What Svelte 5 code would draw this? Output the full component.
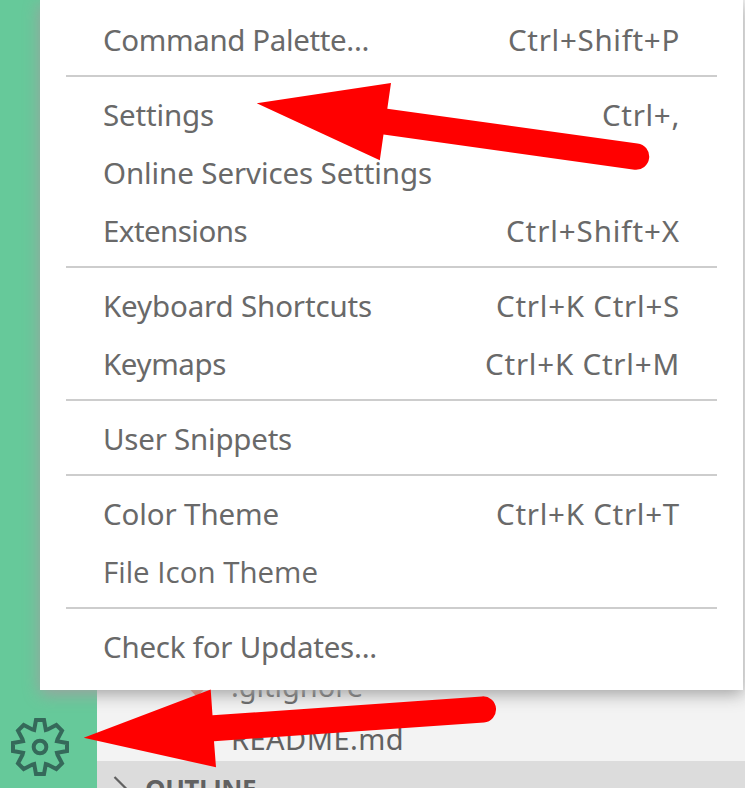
<script>
  const groups = [
    [{ label: 'Command Palette...', w: 264, keys: 'Ctrl+Shift+P', kw: 170 }],
    [
      { label: 'Settings', w: 109, keys: 'Ctrl+,', kw: 76 },
      { label: 'Online Services Settings', w: 327 },
      { label: 'Extensions', w: 142, keys: 'Ctrl+Shift+X', kw: 172 }
    ],
    [
      { label: 'Keyboard Shortcuts', w: 267, keys: 'Ctrl+K Ctrl+S', kw: 182 },
      { label: 'Keymaps', w: 121, keys: 'Ctrl+K Ctrl+M', kw: 193 }
    ],
    [{ label: 'User Snippets', w: 187 }],
    [
      { label: 'Color Theme', w: 174, keys: 'Ctrl+K Ctrl+T', kw: 182 },
      { label: 'File Icon Theme', w: 213, plain: true }
    ],
    [{ label: 'Check for Updates...', w: 272 }]
  ];

  // Tracks a label so that it occupies the given width.
  function fit(node, width) {
    const natural = node.getBoundingClientRect().width;
    const count = node.textContent.length;
    node.style.letterSpacing = `${(width + 2 - natural) / count}px`;
  }
</script>

<div class="window">
  <aside class="activity">
    <svg class="gear" viewBox="-90 -90 180 180" width="60" height="60">
      <g fill="none" stroke="#35695a" stroke-width="12" stroke-miterlimit="8">
        <path d="M-12-81H12L17.500-51L23-52.500L49-66L66-49L52.500-23L51-17.500L81-12V12L51 17.500L52.500 23L66 49L49 66L23 52.500L17.500 51L12 81H-12L-17.500 51L-23 52.500L-49 66L-66 49L-52.500 23L-51 17.500L-81 12V-12L-51-17.500L-52.500-23L-66-49L-49-66L-23-52.500L-17.500-51Z" />
        <circle r="19" />
      </g>
    </svg>
  </aside>
  <main class="explorer">
    <div class="files">
      <div class="file">
        <svg class="git" viewBox="0 0 30 30" width="30" height="30">
          <path d="M0 15L14 30L28 15L14 1Z" fill="#f0805c" />
        </svg>
        <span use:fit={130}>.gitignore</span>
      </div>
      <div class="file"><span use:fit={171}>README.md</span></div>
    </div>
    <div class="outline">
      <svg class="chevron" viewBox="0 0 16 28" width="16" height="28">
        <path d="M1.500 1L14 13.500L1.500 26" fill="none" stroke="#616161" stroke-width="2.200" />
      </svg>
      <b use:fit={109}>OUTLINE</b>
    </div>
  </main>

  <nav class="menu">
    {#each groups as group}
      <ul>
        {#each group as item}
          <li>
            <span class:plain={item.plain} use:fit={item.w}>{item.label}</span>
            {#if item.keys}<span class="keys" use:fit={item.kw}>{item.keys}</span>{/if}
          </li>
        {/each}
      </ul>
    {/each}
  </nav>

  <svg class="arrows" viewBox="0 0 745 788" width="745" height="788" fill="#f00">
    <path d="M256.700 103.300L391 83L387.300 108.700L637.500 143.400A13.200 13.200 0 0 1 634.500 169.700L383.500 134.500L379.800 160.300Z" />
    <path d="M83.700 737.700L210.700 689.500L212.500 715.300L482 696.400A13 13 0 0 1 484 722.400L214 741.300L216 767.300Z" />
  </svg>
</div>

<style>
  .window {
    position: relative;
    display: flex;
    width: 745px;
    height: 788px;
    overflow: hidden;
    font-family: 'Noto Sans', 'Open Sans', sans-serif;
    font-size: 29.500px;
    color: #616161;
    white-space: nowrap;
  }
  .activity {
    width: 97px;
    display: flex;
    flex-direction: column;
    justify-content: flex-end;
    padding: 0 0 11px 10px;
    box-sizing: border-box;
    background: #66c99a;
  }
  .gear { display: block; }
  .explorer {
    flex: 1;
    display: flex;
    flex-direction: column;
    background: #f3f3f3;
  }
  .files {
    flex: 1;
    display: flex;
    flex-direction: column;
    justify-content: flex-end;
  }
  .file {
    display: flex;
    align-items: center;
    height: 53px;
    line-height: 53px;
    padding-left: 134px;
    font-size: 29px;
  }
  .file span { padding-top: 7px; }
  .git { margin: 0 18px 0 -48px; }
  .outline {
    display: flex;
    height: 27px;
    background: #dcdcdc;
    padding: 0 0 0 16px;
  }
  .chevron { margin: 15px 16px 0 0; flex: none; }
  .outline b {
    font-family: 'Open Sans', sans-serif;
    font-size: 26px;
    line-height: 56px;
  }
  .menu {
    position: absolute;
    left: 40px;
    top: 0;
    width: 703px;
    height: 690px;
    padding: 2px 26px 0;
    box-sizing: border-box;
    background: #fff;
    box-shadow: 0 4px 16px #a0a0a0;
  }
  ul {
    list-style: none;
    margin: 0;
    padding: 9px 0 6px;
    border-bottom: 2px solid #cdcdcd;
  }
  ul:last-child { border: 0; }
  li {
    display: flex;
    justify-content: space-between;
    height: 58px;
    line-height: 58px;
    padding: 0 36px 0 37px;
    color: #696969;
  }
  .plain { font-family: 'Open Sans', sans-serif; }
  .keys { margin-right: 1px; }
  .arrows { position: absolute; inset: 0; }
</style>
